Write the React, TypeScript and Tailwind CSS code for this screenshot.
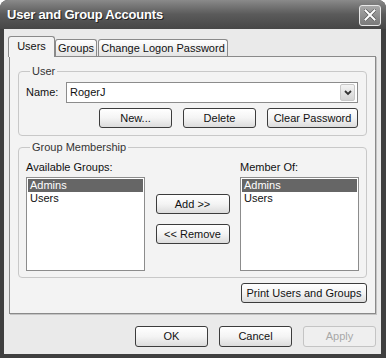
import React from "react";

const btn =
  "flex h-[20px] items-center justify-center rounded-[3px] border border-[#3c3c3c] bg-gradient-to-b from-white via-[#f4f4f4] to-[#dcdcdc] text-[11px] leading-none text-[#111]";

function Button({ label, className = "" }: { label: string; className?: string }) {
  return <div className={`${btn} ${className}`}>{label}</div>;
}

function ListBox({ items }: { items: string[] }) {
  return (
    <div className="h-[94px] w-[119px] border border-[#8c8c8c] bg-white p-px">
      {items.map((item, i) => (
        <div
          key={item}
          className={
            i === 0
              ? "h-[13px] bg-[#666] pl-[2px] text-[11px] leading-[13px] text-white"
              : "h-[13px] pl-[2px] text-[11px] leading-[13px] text-[#111]"
          }
        >
          {item}
        </div>
      ))}
    </div>
  );
}

export default function App() {
  return (
    <div className="h-[358px] w-[386px] bg-white font-['Liberation_Sans',Arial,sans-serif] text-[#111]">
      <div className="flex h-[358px] w-[386px] flex-col rounded-t-[8px] bg-[#3f3f3f] pb-[4px] pl-[4px] pr-[5px]">
        {/* Title bar */}
        <div className="-ml-[4px] -mr-[5px] flex h-[29px] items-center rounded-t-[8px] bg-gradient-to-b from-[#8a8a8a] via-[#5a5a5a] to-[#474747] pl-[7px] pr-[5px]">
          <span className="text-[13px] font-bold tracking-[-0.2px] text-white [text-shadow:1px_1px_0_#222]">
            User and Group Accounts
          </span>
          <div className="ml-auto mt-[1px] flex h-[21px] w-[22px] items-center justify-center rounded-[3px] border border-[#e8e8e8] bg-gradient-to-b from-[#a8a8a8] to-[#7a7a7a]">
            <svg width="12" height="12" viewBox="0 0 12 12">
              <path d="M1.5 1.5 L10.5 10.5 M10.5 1.5 L1.5 10.5" stroke="#555" strokeWidth="3.2" strokeLinecap="square" />
              <path d="M1.5 1.5 L10.5 10.5 M10.5 1.5 L1.5 10.5" stroke="#fff" strokeWidth="2" strokeLinecap="square" />
            </svg>
          </div>
        </div>

        {/* Client area */}
        <div className="flex flex-1 flex-col bg-[#eaeaea]">
          {/* Tabs */}
          <div className="mt-[7px] flex h-[20px] items-end pl-[4px]">
            <div className="relative z-10 -mb-px flex h-[21px] w-[47px] items-start justify-center rounded-t-[3px] border border-b-0 border-[#8a8a8a] bg-[#f3f3f3] pt-[4px] text-[11px] leading-none">
              Users
            </div>
            <div className="flex h-[17px] w-[42px] items-center justify-center rounded-t-[3px] border border-b-0 border-[#8a8a8a] bg-gradient-to-b from-white to-[#e4e4e4] text-[11px] leading-none">
              Groups
            </div>
            <div className="ml-px flex h-[17px] w-[130px] items-center justify-center rounded-t-[3px] border border-b-0 border-[#8a8a8a] bg-gradient-to-b from-white to-[#e4e4e4] text-[11px] leading-none">
              Change Logon Password
            </div>
          </div>

          {/* Panel */}
          <div className="ml-[5px] flex h-[258px] w-[367px] flex-col border border-[#8a8a8a] bg-[#f3f3f3] px-[8px] shadow-[1px_1px_0_#c4c4c4]">
            <fieldset className="mt-[8px] h-[71px] rounded-[4px] border border-[#c8c8c8] pb-[7px] pl-[7px] pr-[8px]">
              <legend className="ml-[4px] px-[2px] text-[11px] leading-[13px] text-[#333]">User</legend>
              <div className="mt-[4px] flex items-center">
                <span className="w-[40px] text-[11px]">Name:</span>
                <div className="flex h-[21px] flex-1 items-center border border-[#8c8c8c] bg-white pl-[3px] pr-[2px]">
                  <span className="text-[11px]">RogerJ</span>
                  <div className="ml-auto flex h-[17px] w-[15px] items-center justify-center rounded-[2px] border border-[#c8c8c8] bg-gradient-to-b from-[#f4f4f4] to-[#d4d4d4]">
                    <svg width="8" height="6" viewBox="0 0 8 6">
                      <path d="M1 1 L4 4 L7 1" stroke="#333" strokeWidth="1.8" fill="none" />
                    </svg>
                  </div>
                </div>
              </div>
              <div className="mt-[5px] flex justify-end gap-[11px]">
                <Button label="New..." className="w-[73px]" />
                <Button label="Delete" className="w-[73px]" />
                <Button label="Clear Password" className="w-[91px]" />
              </div>
            </fieldset>

            <fieldset className="mt-[5px] h-[137px] rounded-[4px] border border-[#c8c8c8] pb-[6px] pl-[7px] pr-[7px]">
              <legend className="ml-[4px] px-[2px] text-[11px] leading-[13px] text-[#333]">Group Membership</legend>
              <div className="mt-[7px] flex justify-between">
                <div className="flex flex-col">
                  <span className="h-[13px] text-[11px] leading-[13px]">Available Groups:</span>
                  <div className="mt-[3px]">
                    <ListBox items={["Admins", "Users"]} />
                  </div>
                </div>
                <div className="flex flex-col pt-[33px]">
                  <Button label="Add >>" className="w-[74px]" />
                  <Button label="<< Remove" className="mt-[10px] w-[74px]" />
                </div>
                <div className="flex flex-col">
                  <span className="h-[13px] text-[11px] leading-[13px]">Member Of:</span>
                  <div className="mt-[3px]">
                    <ListBox items={["Admins", "Users"]} />
                  </div>
                </div>
              </div>
            </fieldset>

            <div className="mt-[5px] flex justify-end">
              <Button label="Print Users and Groups" className="w-[126px]" />
            </div>
          </div>

          {/* Dialog buttons */}
          <div className="mt-[12px] flex justify-end gap-[11px] pr-[5px]">
            <Button label="OK" className="h-[21px] w-[73px]" />
            <Button label="Cancel" className="h-[21px] w-[73px]" />
            <div className="flex h-[21px] w-[73px] items-center justify-center rounded-[3px] border border-[#c4c4c4] bg-[#efefef] text-[11px] leading-none text-[#a8a8a8]">
              Apply
            </div>
          </div>
        </div>
      </div>
    </div>
  );
}
